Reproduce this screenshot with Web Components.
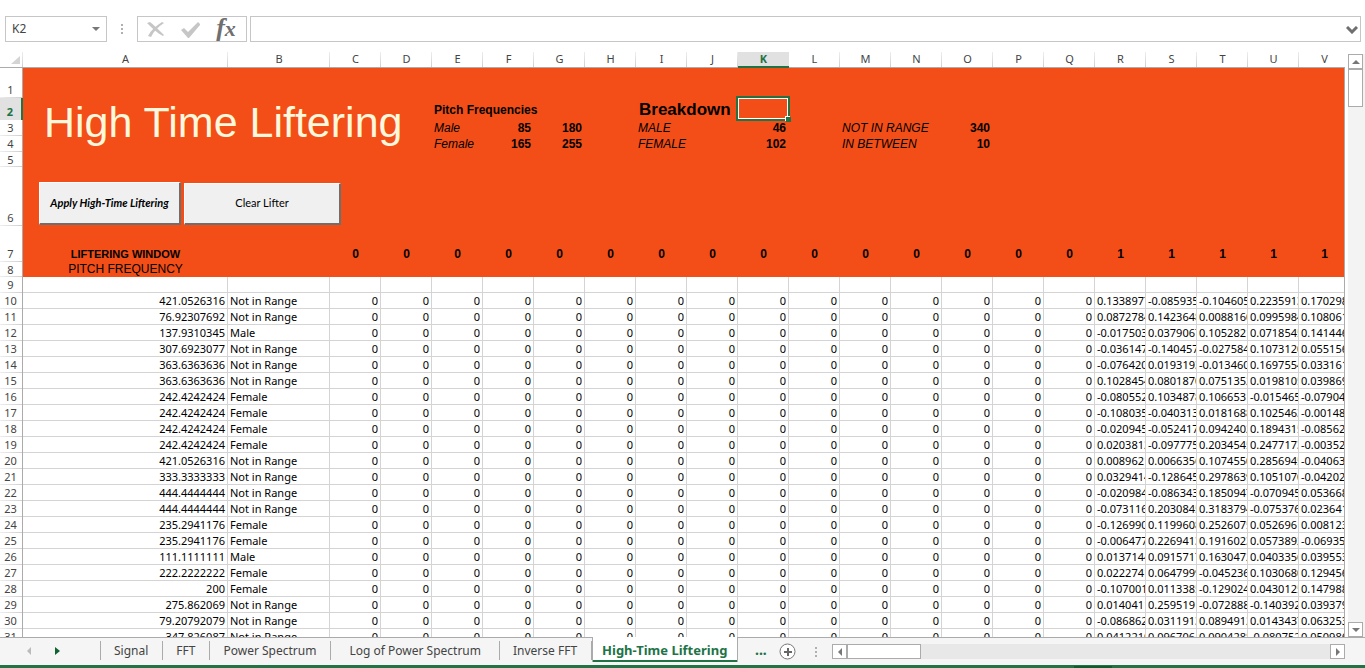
<!DOCTYPE html>
<html lang="en">
<head>
<meta charset="utf-8">
<title>High-Time Liftering</title>
<style>
html, body { margin: 0; height: 100%; overflow: hidden; background: #fff; }
</style>
</head>
<body>
<workbook-app>
  <formula-bar slot="formula" cell="K2"></formula-bar>
  <sheet-grid slot="grid"></sheet-grid>
  <scroll-bar slot="vscroll" direction="vertical"></scroll-bar>
  <sheet-tabs slot="tabs">
    <sheet-tab>Signal</sheet-tab>
    <sheet-tab>FFT</sheet-tab>
    <sheet-tab>Power Spectrum</sheet-tab>
    <sheet-tab wide>Log of Power Spectrum</sheet-tab>
    <sheet-tab>Inverse FFT</sheet-tab>
    <sheet-tab active>High-Time Liftering</sheet-tab>
    <scroll-bar slot="hscroll" direction="horizontal"></scroll-bar>
  </sheet-tabs>
</workbook-app>

<script>
const define = (name, html, setup) => {
  const tpl = document.createElement('template');
  tpl.innerHTML = html;
  customElements.define(name, class extends HTMLElement {
    constructor() {
      super();
      this.attachShadow({ mode: 'open' }).append(tpl.content.cloneNode(true));
    }
    connectedCallback() { if (setup) setup(this, this.shadowRoot); }
  });
};

define('workbook-app', `
<style>
:host { display: flex; flex-direction: column; height: 100vh; overflow: hidden;
  font-family: "Noto Sans", "Open Sans", sans-serif; font-size: 11px; color: #000;
  --green: #217346; --line: #d4d4d4; --edge: #ababab; }
main { display: flex; flex: 1; min-height: 0; }
footer { height: 3px; flex: none; background: linear-gradient(#0e5c2f, #0e5c2f) right 253px bottom / 38px 2px no-repeat var(--green); }
</style>
<slot name="formula"></slot>
<main><slot name="grid"></slot><slot name="vscroll"></slot></main>
<slot name="tabs"></slot>
<footer></footer>`);

define('formula-bar', `
<style>
:host { display: flex; padding: 16px 4px 10px 5px; flex: none; }
.box { box-sizing: border-box; height: 26px; border: 1px solid #c6c6c6; display: flex; align-items: center; background: #fff; }
.name { width: 102px; }
.tools { width: 110px; margin-right: 3px; padding: 0 5px 0 3px; justify-content: space-between; }
.formula { flex: 1; min-width: 0; }
input { border: 0; outline: 0; background: none; font: 12px/16px "Noto Sans", sans-serif; color: #444; padding: 0 0 0 6px; min-width: 0; flex: 1; }
button { border: 0; background: none; padding: 0; display: flex; align-items: center; justify-content: center; flex: none; }
.name button { width: 20px; height: 24px; }
.tools button { width: 30px; height: 24px; }
.tools .fx { font: italic 700 26px/22px "Liberation Serif", serif; color: #6f6f6f; align-items: flex-start; }
.fx span { font-size: 22px; line-height: 24px; }
.formula button { width: 16px; height: 24px; padding-top: 2px; }
.grip { width: 30px; display: flex; align-items: center; justify-content: center; }
svg { display: block; }
</style>
<div class="box name"><input aria-label="Name box"><button aria-label="Open name list"><svg width="8" height="4"><path d="M0 0h8L4 4z" fill="#777"/></svg></button></div>
<div class="grip"><svg width="2" height="12"><path d="M0 1h2v2H0zM0 5h2v2H0zM0 9h2v2H0z" fill="#b0b0b0"/></svg></div>
<div class="box tools">
<button aria-label="Cancel"><svg width="18" height="17" viewBox="0 0 18 17"><path d="M0 2l3-1c5 4 9 8 14 13l-1 1C10 12 5 7 0 2zM15 1l2 1C11 6 7 10 4 16l-3-1C4 9 9 5 15 1z" fill="#c6c6c6"/></svg></button>
<button aria-label="Enter"><svg width="20" height="17" viewBox="0 0 20 17"><path d="M0 9l3-2 4 4L17 1l2 2v1L8 17H7z" fill="#c6c6c6"/></svg></button>
<button class="fx" aria-label="Insert function">f<span>x</span></button>
</div>
<div class="box formula"><input aria-label="Formula"><button aria-label="Expand formula bar"><svg width="12" height="8" viewBox="0 0 12 8"><path d="M1 1l5 5 5-5" fill="none" stroke="#6f6f6f" stroke-width="3"/></svg></button></div>`,
(host, root) => { root.querySelector('.name input').value = host.getAttribute('cell') || ''; });

define('scroll-bar', `
<style>
:host { display: flex; box-sizing: border-box; }
:host([direction=vertical]) { flex-direction: column; width: 17px; margin-left: 3px; padding: 2px 2px 0 0; flex: none; background: linear-gradient(#fff, #fff) top / 100% 2px no-repeat #f3f3f3; }
:host([direction=horizontal]) { flex: 1; height: 15px; background: #e8e8e8; }
button { width: 15px; height: 15px; box-sizing: border-box; border: 1px solid var(--edge); background: #fff; padding: 0; display: flex; align-items: center; justify-content: center; flex: none; }
.thumb { background: #fff; border: 1px solid var(--edge); box-sizing: border-box; flex: none; }
:host([direction=vertical]) .thumb { height: 38px; }
:host([direction=horizontal]) .thumb { width: 74px; }
.rest { flex: 1; }
:host([direction=horizontal]) svg { transform: rotate(-90deg); }
</style>
<button aria-label="Scroll back"><svg width="8" height="4"><path d="M0 4h8L4 0z" fill="#777"/></svg></button>
<div class="thumb"></div><div class="rest"></div>
<button aria-label="Scroll forward"><svg width="8" height="4"><path d="M0 0h8L4 4z" fill="#777"/></svg></button>`);

define('sheet-tab', `
<style>
:host { display: flex; flex: none; }
button { border: 0; background: none; padding: 0 14px 0 13px; font: 12px/18px "Noto Sans", sans-serif; color: #444; white-space: nowrap;
  height: 19px; margin-top: 4px; border-right: 1px solid var(--edge); }
:host([wide]) button { padding: 0 18px; }
:host([active]) button { margin: 0; height: 25px; background: #fff; color: var(--green); font-size: 13px; font-weight: 700; border: solid var(--edge); border-width: 0 1px; box-shadow: inset 0 -2px var(--green); padding: 0 10px 0 9px; }
</style>
<button><slot></slot></button>`);

define('sheet-tabs', `
<style>
:host { display: flex; height: 28px; box-sizing: border-box; border-top: 1px solid var(--edge); background: #f5f5f5; flex: none; padding-right: 20px; }
nav { display: flex; margin-top: -1px; }
.arrows { width: 100px; display: flex; align-items: center; gap: 14px; padding: 0 0 2px 21px; box-sizing: border-box; flex: none; }
.first { width: 1px; height: 19px; margin-top: 3px; background: var(--edge); flex: none; }
button { border: 0; background: none; padding: 0; display: flex; align-items: center; justify-content: center; width: 15px; height: 18px; flex: none; }
.more { font: 700 14px/14px "Noto Sans", sans-serif; color: var(--green); width: 41px; height: 24px; padding-left: 4px; }
.new { width: 17px; height: 27px; }
.grip { width: 36px; padding-left: 4px; box-sizing: border-box; display: flex; align-items: center; justify-content: center; height: 27px; flex: none; }
.scroll { flex: 1; display: flex; padding-top: 6px; min-width: 0; }
</style>
<div class="arrows"><button aria-label="Previous sheets"><svg width="4" height="8"><path d="M4 0v8L0 4z" fill="#bbb"/></svg></button><button aria-label="Next sheets"><svg width="5" height="8"><path d="M0 0v8l5-4z" fill="#0e6332"/></svg></button></div>
<div class="first"></div>
<nav><slot></slot></nav>
<button class="more" aria-label="More sheets">...</button>
<button class="new" aria-label="New sheet"><svg width="17" height="17"><circle cx="8.5" cy="8.5" r="7.5" fill="#fff" stroke="#777"/><path d="M8 5h2v3h3v2h-3v3H8v-3H5V8h3z" fill="#666"/></svg></button>
<div class="grip"><svg width="2" height="12"><path d="M0 1h2v2H0zM0 5h2v2H0zM0 9h2v2H0z" fill="#b0b0b0"/></svg></div>
<div class="scroll"><slot name="hscroll"></slot></div>`);

const labels = `421.0526316 N,76.92307692 N,137.9310345 M,307.6923077 N,363.6363636 N,363.6363636 N,242.4242424 F,242.4242424 F,242.4242424 F,242.4242424 F,421.0526316 N,333.3333333 N,444.4444444 N,444.4444444 N,235.2941176 F,235.2941176 F,111.1111111 M,222.2222222 F,200 F,275.862069 N,79.20792079 N,347.826087 N`.split(',').map(s => s.split(' '));
const names = { N: 'Not in Range', M: 'Male', F: 'Female' };
const values = `0.1338977 -0.085935 -0.104605 0.2235913 0.170298
0.0872784 0.1423648 0.0088160 0.0995984 0.108061
-0.017503 0.0379067 0.1052821 0.0718545 0.141446
-0.036147 -0.140457 -0.027584 0.1073120 0.055156
-0.076420 0.0193193 -0.013460 0.1697554 0.033161
0.1028454 0.0801870 0.0751352 0.0198105 0.039869
-0.080552 0.1034878 0.1066531 -0.015465 -0.07904
-0.108035 -0.040313 0.0181688 0.1025463 -0.00148
-0.020945 -0.052417 0.0942402 0.1894315 -0.08562
0.0203812 -0.097775 0.2034545 0.2477173 -0.00352
0.0089621 0.0066356 0.1074550 0.2856945 -0.04063
0.0329414 -0.128645 0.2978639 0.1051070 -0.04202
-0.020984 -0.086343 0.1850947 -0.070945 0.053668
-0.073116 0.2030845 0.3183794 -0.075376 0.023641
-0.126990 0.1199608 0.2526075 0.0526961 0.008123
-0.006477 0.2269413 0.1916023 0.0573892 -0.06935
0.0137144 0.0915717 0.1630472 0.0403356 0.039553
0.0222741 0.0647999 -0.045236 0.1030680 0.129456
-0.107001 0.0113385 -0.129024 0.0430125 0.147988
0.0140411 0.2595191 -0.072888 -0.140392 0.039379
-0.086862 0.0311913 0.0894912 0.0143437 0.063253
0.0412210 0.0967064 0.0904288 -0.080752 0.050986`.split('\n').map(s => s.split(' '));

define('sheet-grid', `
<style>
:host { display: block; flex: 1; min-width: 0; overflow: hidden; position: relative; box-sizing: border-box; }
:host::after { content: ""; position: absolute; inset: 15px 0 0 auto; width: 1px; background: var(--edge); }
table { table-layout: fixed; border-collapse: separate; border-spacing: 0; width: 1350px; }
.n { width: 23px; } .a { width: 205px; } .b { width: 102px; }
th, td { box-sizing: border-box; padding: 0 2px; height: 16px; line-height: 15px; vertical-align: bottom; white-space: nowrap; overflow: hidden; text-align: left; font-weight: 400; }
thead th { text-align: center; vertical-align: top; color: #444; font-size: 11px; line-height: 14px; border-bottom: 1px solid var(--edge);
  background: linear-gradient(#eee, #cfcfcf) right / 1px 100% no-repeat; }
thead th.sel { background: #e1e1e1; color: var(--green); font-weight: 700; border-bottom: 2px solid var(--green); }
thead svg { display: block; margin: 4px 0 0 9px; }
tbody th { text-align: center; color: #444; padding: 0 1px 1px 0; border-right: 1px solid var(--edge);
  background: linear-gradient(90deg, #eee, #cfcfcf) bottom / 100% 1px no-repeat; }
tbody th.sel { background: #e1e1e1; color: var(--green); font-weight: 700; border-right: 2px solid var(--green); }
tbody .r5 th, tbody .r8 th { padding-bottom: 0; }
td { border: solid var(--line); border-width: 0 1px 1px 0; }
.num { text-align: right; }
.hot td { background: #f34e17; border: 0; font: 12px/15px "Liberation Sans", Arial, sans-serif; }
.hot td.num { padding-right: 3px; }
.hot b { font-weight: 700; }
.hot td.title { font-size: 43px; line-height: 50px; color: #fff8dc; vertical-align: middle; padding: 8px 0 0 21px; }
.hot td.mid { text-align: center; font-weight: 700; }
.hot td.window { font-size: 11px; }
.hot td.label { padding-bottom: 2px; }
.r1 > * { height: 30px; } .r2 > * { height: 22px; } .r5 > *, .r8 > * { height: 15px; }
.r6 > * { height: 59px; } .r7 > * { height: 36px; }
.hot td.big { padding-left: 3px; font-size: 17px; line-height: 21px; }
.hot td.pick { position: relative; overflow: visible; }
.pick::before { content: ""; position: absolute; inset: -2px -1px -1px -2px; border: 2px solid var(--green); box-shadow: inset 0 0 0 1px #fff; }
.pick::after { content: ""; position: absolute; right: -2px; bottom: -2px; width: 5px; height: 5px; background: var(--green); box-shadow: -1px -1px #fff; }
.actions { display: flex; gap: 3px; padding: 0 0 1px 14px; align-items: flex-end; }
.actions button { box-sizing: border-box; height: 42px; width: 157px; padding: 0 0 2px; border: solid; border-width: 1px 2px 2px 1px; border-color: #fff #6e6e6e #6e6e6e #fff; background: #f0f0f0; font: 11px/15px Lato, sans-serif; color: #000; }
.actions button:first-child { width: 142px; height: 43px; font-weight: 700; font-style: italic; }
.center { text-align: center; }
</style>
<table>
<colgroup><col class="n"><col class="a"><col class="b"></colgroup>
<thead><tr></tr></thead>
<tbody></tbody>
</table>`,
(host, root) => {
  const cols = [...'ABCDEFGHIJKLMNOPQRSTUV'];
  root.querySelector('colgroup').innerHTML += '<col>'.repeat(20);
  root.querySelector('thead tr').innerHTML =
    '<th aria-label="Select all"><svg width="9" height="8"><path d="M9 0v8H0z" fill="#d4d4d4"/></svg></th>' +
    cols.map(c => `<th scope="col"${c === 'K' ? ' class="sel"' : ''}>${c}</th>`).join('');
  const blank = n => '<td></td>'.repeat(n);
  const num = v => `<td class="num"><b>${v}</b></td>`;
  const text = (v, span) => `<td colspan="${span}"><i>${v}</i></td>`;
  const top = [
    '<td class="title" colspan="4" rowspan="5">High Time Liftering</td>' + blank(18),
    '<td class="label" colspan="4"><b>Pitch Frequencies</b></td><td class="big" colspan="2"><b>Breakdown</b></td><td class="pick"></td>' + blank(11),
    text('Male', 1) + num(85) + num(180) + blank(1) + text('MALE', 2) + num(46) + blank(1) + text('NOT IN RANGE', 2) + num(340) + blank(7),
    text('Female', 1) + num(165) + num(255) + blank(1) + text('FEMALE', 2) + num(102) + blank(1) + text('IN BETWEEN', 2) + num(10) + blank(7),
    blank(18),
    '<td colspan="4"><div class="actions"><button>Apply High-Time Liftering</button><button>Clear Lifter</button></div></td>' + blank(18),
    '<td class="mid window">LIFTERING WINDOW</td>' + blank(1) + cols.slice(2).map((c, i) => `<td class="mid">${i < 15 ? 0 : 1}</td>`).join(''),
    '<td class="center">PITCH FREQUENCY</td>' + blank(21)
  ];
  let html = top.map((cells, i) => `<tr class="hot r${i + 1}"><th scope="row"${i === 1 ? ' class="sel"' : ''}>${i + 1}</th>${cells}</tr>`).join('');
  html += `<tr><th scope="row">9</th>${blank(22)}</tr>`;
  html += labels.map(([freq, key], i) => `<tr><th scope="row">${i + 10}</th><td class="num">${freq}</td><td>${names[key]}</td>${'<td class="num">0</td>'.repeat(15)}${values[i].map(v => `<td>${v}</td>`).join('')}</tr>`).join('');
  root.querySelector('tbody').innerHTML = html;
});
</script>
</body>
</html>
